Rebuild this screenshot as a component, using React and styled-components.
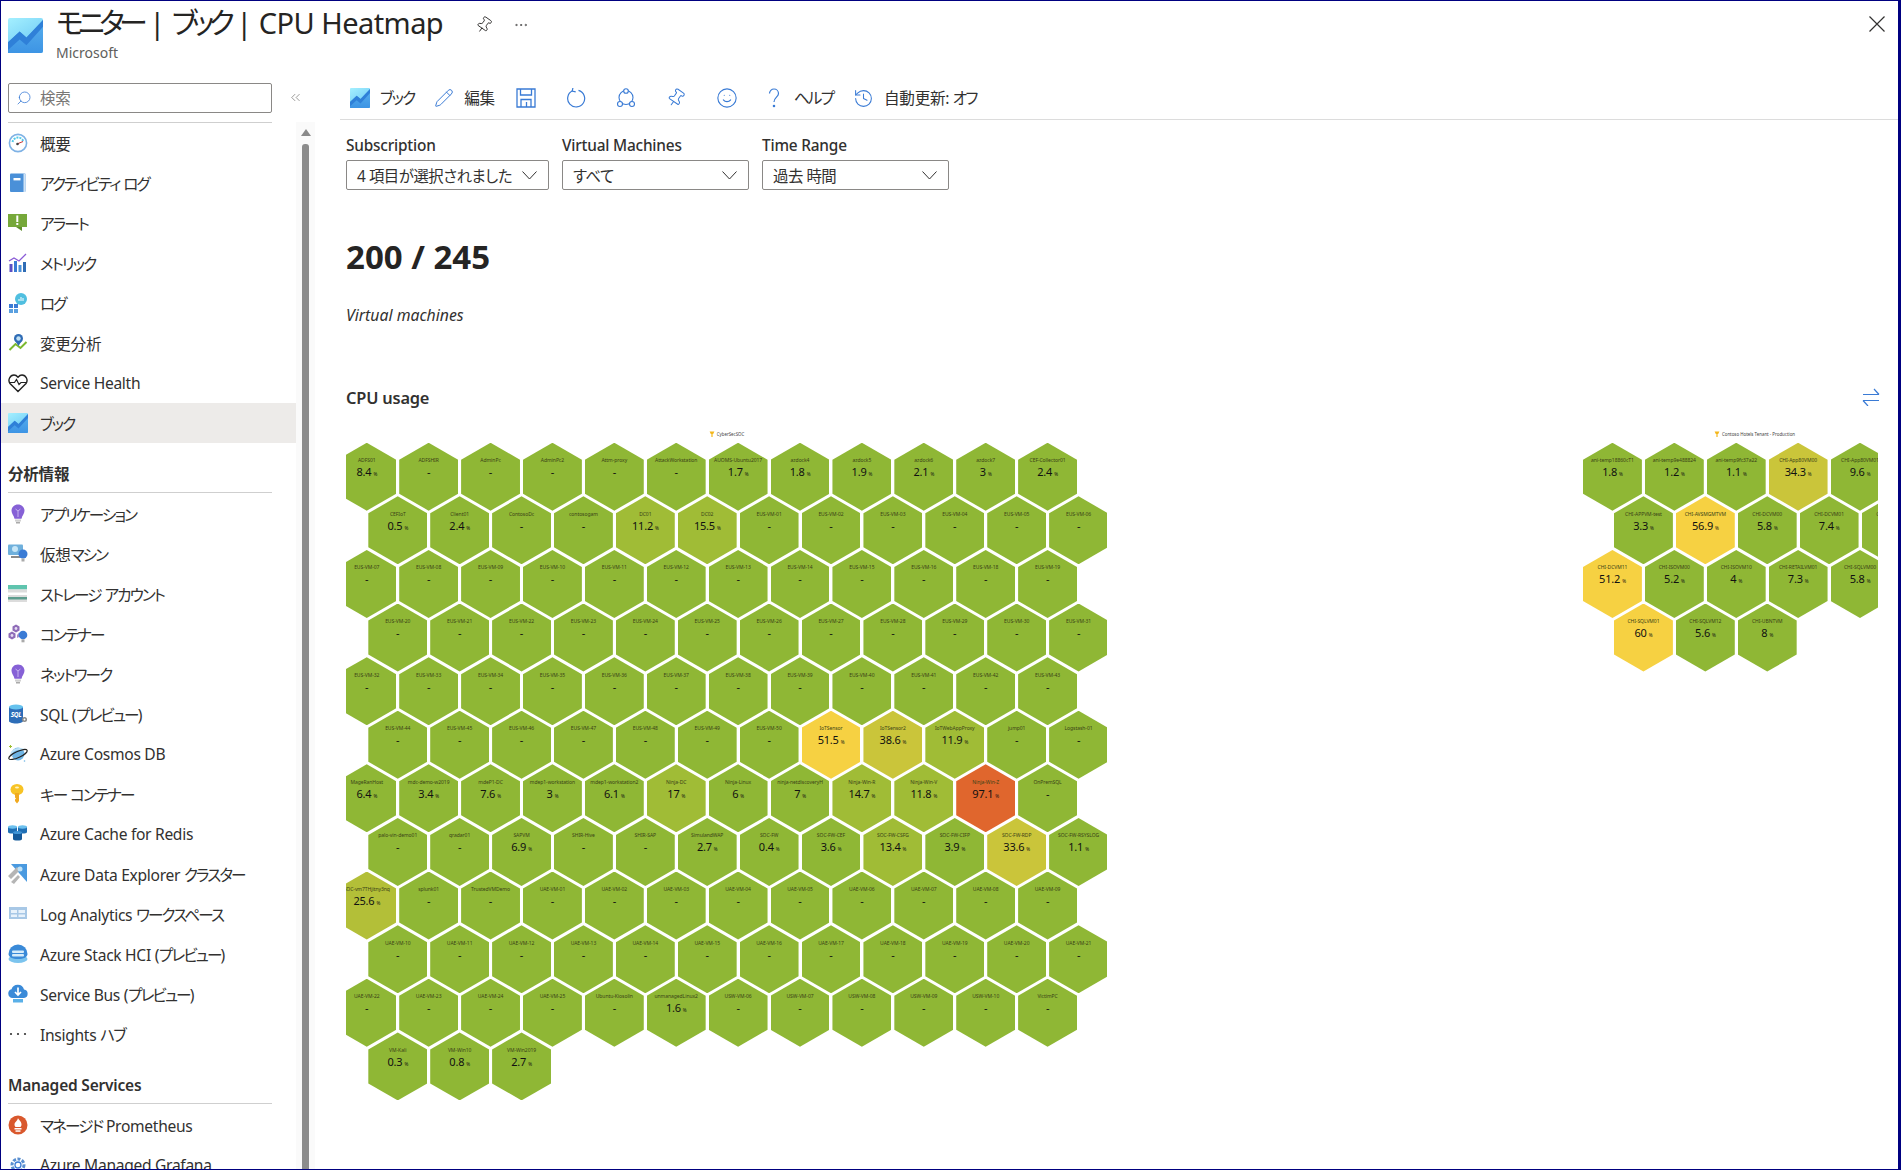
import React from 'react';
import styled, { createGlobalStyle } from 'styled-components';
import { Pencil, Pin, Smile, History, Search, ChevronsLeft, MoreHorizontal } from 'lucide-react';

const Global = createGlobalStyle`
  html, body { margin: 0; padding: 0; background: #fff; }
  body {
    font-family: "Noto Sans", "Noto Sans CJK JP", sans-serif;
    font-feature-settings: "palt";
    color: #323130;
  }
  * { box-sizing: border-box; }
`;

const Kana = styled.span`letter-spacing: -0.12em;`;
const Frame = styled.div`
  width: 1901px; height: 1170px; display: flex; flex-direction: column; overflow: hidden;
  border-style: solid; border-color: #000080; border-width: 1px 3px 1px 1px; background: #fff;
`;
const Header = styled.header`
  height: 68px; flex: none; display: flex; align-items: flex-start; padding: 5px 13px 0 7px;
`;
const LogoWrap = styled.div`margin: 12px 13px 0 0; line-height: 0;`;
const TitleBlock = styled.div`display: flex; flex-direction: column;`;
const TitleRow = styled.div`display: flex; align-items: center; height: 34px;`;
const Title = styled.h1`
  margin: 0; font-size: 29px; line-height: 34px; font-weight: 400; color: #252423; letter-spacing: -0.55px; white-space: nowrap;
  ${Kana} { letter-spacing: -0.19em; }
`;
const TitleAction = styled.span`
  display: inline-flex; color: #323130; margin-left: ${p => p.$ml}px; position: relative; top: 2px;
`;
const Subtitle = styled.div`font-size: 14px; line-height: 20px; margin-top: 3px; color: #605e5c;`;
const CloseBtn = styled.div`margin-left: auto; margin-top: 10px; display: flex; color: #323130;`;

const Body = styled.div`flex: 1; display: flex; min-height: 0;`;
const Sidebar = styled.aside`width: 314px; flex: none; display: flex; min-height: 0;`;
const NavCol = styled.nav`width: 295px; flex: none; overflow: hidden; padding-top: 14px;`;
const SearchBox = styled.div`
  margin: 0 24px 0 7px; height: 30px; border: 1px solid #8a8886; border-radius: 2px;
  display: flex; align-items: center; padding-left: 7px; gap: 8px; font-size: 15.5px; line-height: 26px; color: #797775; letter-spacing: -0.3px;
`;
const Divider = styled.div`height: 1px; background: #cfcfcf; margin: 9px 24px 0 7px;`;
const NavItem = styled.div`
  height: 40px; display: flex; align-items: center; padding-left: 7px; gap: 12px; font-size: 15.6px;
  letter-spacing: -0.3px; white-space: nowrap; color: #323130;
  background: ${p => (p.$active ? '#edebe9' : 'transparent')};
`;
const NavLabel = styled.span`display: block;`;
const SectionHead = styled.div`
  height: 50px; margin: 0 24px 1px 7px; padding-top: 21px; font-size: 15.5px; line-height: 20px; font-weight: 600;
  letter-spacing: -0.2px; border-bottom: 1px solid #cfcfcf; color: #323130;
`;
const ScrollCol = styled.div`width: 19px; flex: none; display: flex; flex-direction: column;`;
const CollapseBtn = styled.div`
  height: 53px; flex: none; margin-left: -20px; padding-top: 21px; display: flex; justify-content: center; align-items: flex-start; color: #605e5c;
`;
const Track = styled.div`flex: 1; background: #fafafa; display: flex; flex-direction: column; align-items: flex-start; padding-left: 6px;`;
const ArrowUp = styled.div`
  margin: 7px 0 0 -1px; width: 0; height: 0; border-left: 5px solid transparent; border-right: 5px solid transparent; border-bottom: 7px solid #8a8a8a;
`;
const Thumb = styled.div`flex: 1; width: 7px; background: #8c8c8c; margin-top: 8px; border-radius: 3px 3px 0 0;`;

const Main = styled.main`flex: 1; min-width: 0; display: flex; flex-direction: column; padding-left: 25px;`;
const Toolbar = styled.div`
  height: 51px; flex: none; display: flex; align-items: center; padding: 8px 0 0 10px; border-bottom: 1px solid #dcdcdc;
  font-size: 15.6px; letter-spacing: -0.3px; color: #323130;
`;
const ToolItem = styled.div`
  display: flex; align-items: center; gap: 10px; margin-left: ${p => p.$ml || 0}px; color: #3a7bd5; line-height: 0;
`;
const ToolLabel = styled.span`color: #323130; line-height: 20px; white-space: nowrap;`;
const Content = styled.div`padding: 0 20px 0 6px; display: flex; flex-direction: column;`;
const Params = styled.div`display: flex; gap: 13px; margin-top: 16px;`;
const Field = styled.div`display: flex; flex-direction: column; width: ${p => p.$w}px;`;
const FieldLabel = styled.label`font-size: 15.4px; line-height: 20px; font-weight: 500; color: #323130; letter-spacing: -0.2px; margin-bottom: 4px;`;
const Select = styled.div`
  height: 30px; border: 1px solid #8a8886; border-radius: 2px; display: flex; align-items: center; justify-content: space-between;
  padding: 0 11px 0 10px; font-size: 15.4px; letter-spacing: -0.45px; color: #323130; white-space: nowrap;
`;
const BigNumber = styled.div`font-size: 33px; line-height: 40px; font-weight: 700; color: #252423; margin-top: 47px;`;
const Caption = styled.div`font-size: 15.8px; line-height: 20px; font-style: italic; color: #323130; margin-top: 28px;`;
const SectionRow = styled.div`display: flex; justify-content: space-between; align-items: center; margin-top: 63px; height: 20px;`;
const SectionTitle = styled.h2`margin: 0; font-size: 16.4px; line-height: 20px; font-weight: 600; color: #323130; letter-spacing: -0.2px;`;
const SwapBtn = styled.div`display: flex; color: #3a7bd5; margin: -3px -2px 0 0;`;
const Clusters = styled.div`display: flex; justify-content: space-between; align-items: flex-start; margin-top: 22px;`;
const Cluster = styled.section`width: ${p => p.$w}px; overflow: hidden; flex: none;`;
const ClusterTitle = styled.div`
  height: 8px; margin-bottom: 4.7px; display: flex; align-items: center; justify-content: center; gap: 2px;
  font-size: 4.4px; line-height: 8px; color: #444; white-space: nowrap; padding-left: ${p => p.$pl || 0}px;
`;
const HexField = styled.div`margin-left: ${p => p.$ml || 0}px;`;
const HexRow = styled.div`
  display: flex; gap: 3px; margin-left: ${p => (p.$odd ? 31 : 0)}px; margin-top: ${p => (p.$first ? 0 : -14.4)}px;
`;
const Hex = styled.div`
  width: 58.9px; height: 68px; flex: none; background: ${p => p.$bg};
  clip-path: polygon(50% 0, 100% 25%, 100% 75%, 50% 100%, 0 75%, 0 25%);
  display: flex; flex-direction: column; align-items: center; padding-top: 14.5px;
`;
const HexName = styled.div`font-size: 5px; line-height: 6px; color: #3a4216; white-space: nowrap; letter-spacing: -0.05px;`;
const HexValue = styled.div`font-size: 11px; line-height: 12px; margin-top: 3px; color: #111; letter-spacing: -0.2px; white-space: nowrap;`;
const HexUnit = styled.span`font-size: 4.6px; margin-left: 2px;`;
const SvgIcon = styled.svg`width: ${p => p.$s || 20}px; height: ${p => p.$s || 20}px; flex: none; display: block;`;

/* Katakana runs are set tighter than the rest of the text, as in the reference font. */
const Jp = ({ children }) =>
  String(children).split(/([\u30A0-\u30FF]+)/).map((part, i) =>
    /[\u30A0-\u30FF]/.test(part) ? <Kana key={i}>{part}</Kana> : part
  );

const BookIcon = ({ s }) => (
  <SvgIcon $s={s} viewBox="0 0 36 36">
    <defs>
      <linearGradient id="bkA" x1="0" y1="0" x2="0.6" y2="1"><stop offset="0" stopColor="#a4f0ff" /><stop offset="1" stopColor="#6cc8f4" /></linearGradient>
      <linearGradient id="bkB" x1="0" y1="0" x2="0" y2="1"><stop offset="0" stopColor="#58b0ee" /><stop offset="1" stopColor="#3d94e4" /></linearGradient>
    </defs>
    <rect width="36" height="36" rx="2" fill="url(#bkA)" />
    <path d="M0 36V25L12 14l7 6L36 2v32a2 2 0 0 1-2 2z" fill="url(#bkB)" />
    <path d="M0 25l12-11 7 6L36 2v7L19 28l-7-6L0 33z" fill="#2f80d8" />
  </SvgIcon>
);
const Gauge = () => (
  <SvgIcon viewBox="0 0 20 20">
    <circle cx="10" cy="10" r="8.6" fill="#fff" stroke="#7fb2e5" strokeWidth="1.6" />
    <path d="M4.5 9a5.6 5.6 0 0 1 11 0" fill="none" stroke="#50c8e8" strokeWidth="2" strokeDasharray="2 1" />
    <path d="M9 11l6-2.5" stroke="#c33" strokeWidth="1" />
    <circle cx="9.5" cy="11" r="1.3" fill="#444" />
  </SvgIcon>
);
const LogBook = () => (
  <SvgIcon viewBox="0 0 20 20">
    <rect x="2" y="0.5" width="15.5" height="18.5" rx="1" fill="#4a90d8" />
    <rect x="15.5" y="0.5" width="2" height="18.5" fill="#cfe3f6" />
    <rect x="5.5" y="5" width="7" height="2.4" fill="#fff" />
  </SvgIcon>
);
const Alert = () => (
  <SvgIcon viewBox="0 0 20 20">
    <rect y="1" width="19" height="13" fill="#76a83a" />
    <path d="M8 14h6v4z" fill="#5e8f2c" />
    <rect x="8.3" y="2.5" width="2" height="6.5" fill="#fff" />
    <rect x="8.3" y="10" width="2" height="2" fill="#fff" />
  </SvgIcon>
);
const Metrics = () => (
  <SvgIcon viewBox="0 0 20 20">
    <path d="M1 8l5-3 5 3 7-7" fill="none" stroke="#8a5bd6" strokeWidth="1.3" />
    <rect x="1.5" y="11" width="3" height="8" fill="#5b4fc4" /><rect x="6" y="8" width="3" height="11" fill="#3a7bd5" />
    <rect x="10.5" y="12" width="3" height="7" fill="#4a90d8" /><rect x="15" y="9" width="3" height="10" fill="#2f6cb5" />
  </SvgIcon>
);
const LogsIcon = () => (
  <SvgIcon viewBox="0 0 20 20">
    <circle cx="13" cy="6" r="6" fill="#50bfe0" />
    <path d="M11 8V6M13 8V4M15 8V5" stroke="#fff" strokeWidth="1" />
    <rect x="1" y="11" width="4" height="4" fill="#3a7bd5" /><rect x="6" y="11" width="4" height="4" fill="#3a7bd5" />
    <rect x="1" y="16" width="4" height="4" fill="#5aa0e0" /><rect x="6" y="16" width="4" height="4" fill="#5aa0e0" />
  </SvgIcon>
);
const Change = () => (
  <SvgIcon viewBox="0 0 20 20">
    <path d="M1.5 17l6-6 5 4 6-6" fill="none" stroke="#7cb82f" strokeWidth="2" />
    <circle cx="10.5" cy="5.5" r="4.5" fill="#2f6cb5" />
    <path d="M8 9l2.5 4 2.5-4z" fill="#2f6cb5" />
    <circle cx="10.5" cy="5.5" r="2.2" fill="#bfe0f5" />
  </SvgIcon>
);
const Heart = () => (
  <SvgIcon viewBox="0 0 20 20">
    <path d="M10 18.5L2 10.5C-0.5 7 2 2 6 2c2 0 3 1 4 2.2C11 3 12 2 14 2c4 0 6.500 5 4 8.500z" fill="#fff" stroke="#222" strokeWidth="1.4" />
    <path d="M1.500 9.500h5l2-3 2.500 5 2-2h5.500" fill="none" stroke="#222" strokeWidth="1.2" />
  </SvgIcon>
);
const Bulb = () => (
  <SvgIcon viewBox="0 0 20 20">
    <path d="M10 0.500c4 0 6.500 3 6.500 6.300 0 3-2.500 4.700-3 8h-7c-.5-3.300-3-5-3-8C3.500 3.500 6 .5 10 .5z" fill="#8661d6" />
    <path d="M7.500 5l2.500 2 2.500-2M10 7v6" fill="none" stroke="#c5b2ee" strokeWidth="1" />
    <rect x="7" y="15.500" width="6" height="2" fill="#d0d0d0" /><rect x="8" y="17.800" width="4" height="1.700" fill="#aaa" />
  </SvgIcon>
);
const VM = () => (
  <SvgIcon viewBox="0 0 20 20">
    <rect y="0.500" width="15" height="10.500" rx="1" fill="#6fb0dc" />
    <circle cx="7" cy="5" r="3" fill="#c7e6f7" />
    <rect x="3" y="12" width="9" height="2" fill="#8a8a8a" />
    <circle cx="15" cy="10" r="4.500" fill="#3a7bd5" /><rect x="13.500" y="14.500" width="3" height="3" fill="#aaa" />
  </SvgIcon>
);
const Storage = () => (
  <SvgIcon viewBox="0 0 20 20">
    <rect y="1" width="19" height="4.500" fill="#5fc4ae" /><rect y="5.500" width="19" height="12.500" fill="#dcdcdc" />
    <rect y="8.500" width="19" height="2.500" fill="#fff" /><rect y="13" width="19" height="2.500" fill="#5d9d8e" />
  </SvgIcon>
);
const Containers = () => (
  <SvgIcon viewBox="0 0 20 20">
    <path d="M8 .5l3.500 2v4l-3.500 2-3.500-2v-4z" fill="#8f6cb8" /><path d="M4 7.500l3.500 2v4L4 15.500l-3.500-2v-4z" fill="#8f6cb8" />
    <circle cx="4" cy="11.500" r="1.400" fill="#e6dcf2" /><circle cx="8" cy="4.500" r="1.400" fill="#e6dcf2" />
    <path d="M11 8.500l1 1v3l-3 1.500v-3z" fill="#a88bcb" />
    <circle cx="15" cy="11" r="4.300" fill="#3a7bd5" /><rect x="13.500" y="15.300" width="3" height="3" fill="#aaa" />
  </SvgIcon>
);
const Sql = () => (
  <SvgIcon viewBox="0 0 20 20">
    <path d="M1 3v14c0 1.300 3 2.500 7 2.500s7-1.200 7-2.500V3z" fill="#2d6db8" />
    <ellipse cx="8" cy="3" rx="7" ry="2.600" fill="#66c2ee" />
    <text x="8" y="13" fontSize="6.500" fontWeight="700" fontStyle="italic" fill="#fff" textAnchor="middle" fontFamily="Noto Sans">SQL</text>
    <circle cx="16.500" cy="15.500" r="2.500" fill="#888" /><circle cx="16.500" cy="15.500" r="1" fill="#fff" />
  </SvgIcon>
);
const Cosmos = () => (
  <SvgIcon viewBox="0 0 20 20">
    <circle cx="10" cy="10" r="6.500" fill="#6fb5e5" />
    <path d="M4 12a8 5 0 0 1 12-6" fill="none" stroke="#bfe2f7" strokeWidth="2" />
    <ellipse cx="10" cy="10.500" rx="10" ry="3" transform="rotate(-25 10 10.500)" fill="none" stroke="#222" strokeWidth="1.100" />
    <path d="M2.500 1v3M1 2.500h3" stroke="#9dbf2f" strokeWidth="1" />
    <circle cx="16.500" cy="17" r=".8" fill="#6fb5e5" />
  </SvgIcon>
);
const Key = () => (
  <SvgIcon viewBox="0 0 20 20">
    <ellipse cx="9" cy="5.500" rx="6.500" ry="5.500" fill="#f7c325" />
    <path d="M7 9h4v8l-2 2.500L7 17v-1.500l1-1-1-1z" fill="#f0a91f" />
    <ellipse cx="9" cy="3.600" rx="2" ry="1" fill="#fff4c2" />
  </SvgIcon>
);
const Redis = () => (
  <SvgIcon viewBox="0 0 20 20">
    <path d="M0 3v5c0 1 2 1.500 4.500 1.500S9 9 9 8V3zM10 3v5c0 1 2 1.500 4.500 1.500S19 9 19 8V3z" fill="#1f6fb5" />
    <ellipse cx="4.500" cy="3" rx="4.500" ry="1.700" fill="#6cc0ee" /><ellipse cx="14.500" cy="3" rx="4.500" ry="1.700" fill="#6cc0ee" />
    <path d="M5 9v6c0 1 2 1.500 4.500 1.500S14 16 14 15V9z" fill="#155a9a" />
    <ellipse cx="9.500" cy="8.500" rx="4.500" ry="1.600" fill="#3f94d6" />
  </SvgIcon>
);
const Explorer = () => (
  <SvgIcon viewBox="0 0 20 20">
    <path d="M3 0h16v18z" fill="#4a9ae0" />
    <path d="M0 12L9 3l3 3-9 9zM3 18l7-7 2 2-6 7z" fill="#b5b5b5" />
    <circle cx="12" cy="5" r="2.500" fill="#bfe2f7" />
  </SvgIcon>
);
const LogA = () => (
  <SvgIcon viewBox="0 0 20 20">
    <rect x="1" y="3" width="18" height="12" fill="#a8c8e6" />
    <path d="M3 6h6v3H3zM10.500 6H17v3h-6.500zM3 10.500h6V13H3zM10.500 10.500H17V13h-6.500z" fill="#e8f2fb" />
  </SvgIcon>
);
const Stack = () => (
  <SvgIcon viewBox="0 0 20 20">
    <ellipse cx="10" cy="15" rx="9.500" ry="4" fill="#7cc4ee" />
    <path d="M.5 10a9.500 9.500 0 0 1 19 0c0 3-4 5-9.500 5s-9.500-2-9.500-5z" fill="#3a8ad8" />
    <rect x="4" y="6.500" width="12" height="2.500" rx="1" fill="#d6ecfa" /><rect x="4" y="10" width="12" height="2.500" rx="1" fill="#d6ecfa" />
  </SvgIcon>
);
const Bus = () => (
  <SvgIcon viewBox="0 0 20 20">
    <path d="M4.500 14a4.500 4.500 0 0 1-1-8.800A6.500 6.500 0 0 1 16 5.500a4.300 4.300 0 0 1 0 8.500z" fill="#3a8ad8" />
    <path d="M10 3.500v7M7 8l3 3 3-3" stroke="#fff" strokeWidth="1.700" fill="none" />
    <rect x="5" y="15" width="10" height="3.500" fill="#5ab0e8" />
  </SvgIcon>
);
const Dots = () => (
  <SvgIcon viewBox="0 0 20 20">
    <circle cx="3" cy="10" r="1.100" fill="#333" /><circle cx="10" cy="10" r="1.100" fill="#333" /><circle cx="17" cy="10" r="1.100" fill="#333" />
  </SvgIcon>
);
const Prom = () => (
  <SvgIcon viewBox="0 0 20 20">
    <circle cx="10" cy="10" r="9.500" fill="#d9582d" />
    <path d="M10 3c.5 2 3.500 3 3.500 6.500 0 1-.5 2-1 2.500h-5c-.5-.5-1-1.500-1-2.500C6.500 7 9.500 6 10 3z" fill="#fff" />
    <rect x="6.500" y="13" width="7" height="1.500" fill="#fff" /><rect x="7.500" y="15.300" width="5" height="1.500" fill="#fff" />
  </SvgIcon>
);
const Grafana = () => (
  <SvgIcon viewBox="0 0 20 20">
    <circle cx="10" cy="10" r="6" fill="none" stroke="#5a8fd0" strokeWidth="3" strokeDasharray="3 1.500" />
    <circle cx="10" cy="10" r="3" fill="#fff" stroke="#3a7bd5" strokeWidth="1.300" />
  </SvgIcon>
);
const Refresh = () => (
  <SvgIcon viewBox="0 0 20 20" fill="none" stroke="currentColor" strokeWidth="1.200">
    <path d="M6.500 2.800a8.500 8.500 0 1 0 6 -.5" /><path d="M7 -.5l-.8 3.500 3.500.8" />
  </SvgIcon>
);
const Share = () => (
  <SvgIcon viewBox="0 0 20 20" fill="none" stroke="currentColor" strokeWidth="1.100">
    <circle cx="10" cy="9.500" r="7" /><circle cx="10" cy="3" r="2.300" fill="#fff" /><circle cx="4" cy="16" r="2.500" fill="#fff" /><circle cx="16" cy="16" r="2.500" fill="#fff" />
  </SvgIcon>
);
const Save = () => (
  <SvgIcon viewBox="0 0 20 20" fill="none" stroke="currentColor" strokeWidth="1.300">
    <path d="M1 1h18v18H1z" /><path d="M4.500 1v6h11V1M5 19v-7.500h10V19M10.500 14v5" />
  </SvgIcon>
);
const Question = () => (
  <SvgIcon viewBox="0 0 20 20" fill="none" stroke="currentColor" strokeWidth="1.200">
    <path d="M5.500 5.500C5.500 3 7.500 1 10 1s4.500 2 4.500 4.500c0 3.500-4.500 4-4.500 8.500" /><circle cx="10" cy="18" r=".7" fill="currentColor" />
  </SvgIcon>
);
const Sprout = () => (
  <SvgIcon $s={6} viewBox="0 0 10 10"><path d="M1 1h8L7 5H6v5H4V5H3z" fill="#f4b71c" /></SvgIcon>
);
const Chevron = () => (
  <SvgIcon $s={15} viewBox="0 0 15 15" fill="none" stroke="#323130" strokeWidth="1"><path d="M.5 3.500l7 7.500 7-7.500" /></SvgIcon>
);
const Swap = () => (
  <SvgIcon $s={18} viewBox="0 0 18 18" fill="none" stroke="currentColor" strokeWidth="1.200">
    <path d="M1 6.500h16M12 1l5 5.500M1 12.500h16M1 12.500L6 18" />
  </SvgIcon>
);
const Close = () => (
  <SvgIcon $s={16} viewBox="0 0 16 16" fill="none" stroke="currentColor" strokeWidth="1.200"><path d="M.5.500l15 15M15.500.500l-15 15" /></SvgIcon>
);

const heat = v => {
  if (v == null || v < 10) return '#8fb735';
  if (v < 20) return '#a0bc36';
  if (v < 30) return '#b3bf38';
  if (v < 45) return '#cac53a';
  if (v < 80) return '#f6d142';
  return '#e0662d';
};
const seq = (p, a, b, skip = []) => {
  const r = [];
  for (let i = a; i <= b; i++) if (!skip.includes(i)) r.push([`${p}-${String(i).padStart(2, '0')}`]);
  return r;
};

const leftRows = [
  [['ADFS01', 8.4], ['ADFSHIR'], ['AdminPc'], ['AdminPc2'], ['Attm-proxy'], ['AttackWorkstation'], ['AUOMS-Ubuntu2017', 1.7], ['azdock4', 1.8], ['azdock5', 1.9], ['azdock6', 2.1], ['azdock7', 3], ['CEF-Collector01', 2.4]],
  [['CEFIoT', 0.5], ['Client01', 2.4], ['ContosoDc'], ['contosogam'], ['DC01', 11.2], ['DC02', 15.5], ...seq('EUS-VM', 1, 6)],
  seq('EUS-VM', 7, 19, [17]),
  seq('EUS-VM', 20, 31),
  seq('EUS-VM', 32, 43),
  [...seq('EUS-VM', 44, 50), ['IoTSensor', 51.5], ['IoTSensor2', 38.6], ['IoTWebAppProxy', 11.9], ['jump01'], ['Logstash-01']],
  [['MageRanHost', 6.4], ['mdc-demo-w2019', 3.4], ['mdeP1-DC', 7.6], ['mdep1-workstation', 3], ['mdep1-workstation2', 6.1], ['Ninja-DC', 17], ['Ninja-Linux', 6], ['ninja-netdiscoveryH', 7], ['Ninja-Win-R', 14.7], ['Ninja-Win-V', 11.8], ['Ninja-Win-Z', 97.1], ['OnPremSQL']],
  [['palo-vin-demo01'], ['qradar01'], ['SAPVM', 6.9], ['SHIR-Hive'], ['SHIR-SAP'], ['SimulandWAP', 2.7], ['SOC-FW', 0.4], ['SOC-FW-CEF', 3.6], ['SOC-FW-CSFG', 13.4], ['SOC-FW-CIFP', 3.9], ['SOC-FW-RDP', 33.6], ['SOC-FW-RSYSLOG', 1.1]],
  [['SOC-vm7THjitny3nq', 25.6], ['splunk01'], ['TrustedVMDemo'], ...seq('UAE-VM', 1, 9)],
  seq('UAE-VM', 10, 21),
  [...seq('UAE-VM', 22, 25), ['Ubuntu-Kiosolin'], ['unmanagedLinux2', 1.6], ...seq('USW-VM', 6, 10), ['VictimPC']],
  [['VM-Kali', 0.3], ['VM-Win10', 0.8], ['VM-Win2019', 2.7]],
];
const rightRows = [
  [['ani-temp18860cT1', 1.8], ['ani-temp9e488824', 1.2], ['ani-temp9fc37a22', 1.1], ['CHI-App80VM00', 34.3], ['CHI-App80VM01', 9.6]],
  [['CHI-APPVM-test', 3.3], ['CHI-AVSMGMTVM', 56.9], ['CHI-DCVM00', 5.8], ['CHI-DCVM01', 7.4], ['CHI-DCVM10', 5.3]],
  [['CHI-DCVM11', 51.2], ['CHI-ISOVM00', 5.2], ['CHI-ISOVM10', 4], ['CHI-RETAILVM01', 7.3], ['CHI-SQLVM00', 5.8]],
  [['CHI-SQLVM01', 60], ['CHI-SQLVM12', 5.6], ['CHI-UBNTVM', 8]],
];

const navTop = [
  [Gauge, '概要'], [LogBook, 'アクティビティ ログ'], [Alert, 'アラート'], [Metrics, 'メトリック'], [LogsIcon, 'ログ'],
  [Change, '変更分析'], [Heart, 'Service Health'], [BookIcon, 'ブック', true],
];
const navInsights = [
  [Bulb, 'アプリケーション'], [VM, '仮想マシン'], [Storage, 'ストレージ アカウント'], [Containers, 'コンテナー'], [Bulb, 'ネットワーク'],
  [Sql, 'SQL (プレビュー)'], [Cosmos, 'Azure Cosmos DB'], [Key, 'キー コンテナー'], [Redis, 'Azure Cache for Redis'],
  [Explorer, 'Azure Data Explorer クラスター'], [LogA, 'Log Analytics ワークスペース'], [Stack, 'Azure Stack HCI (プレビュー)'],
  [Bus, 'Service Bus (プレビュー)'], [Dots, 'Insights ハブ'],
];
const navManaged = [[Prom, 'マネージド Prometheus'], [Grafana, 'Azure Managed Grafana']];

const NavList = ({ items }) => items.map(([Icon, label, active]) => (
  <NavItem key={label} $active={active}><Icon /><NavLabel><Jp>{label}</Jp></NavLabel></NavItem>
));

const HexGrid = ({ rows, ml }) => (
  <HexField $ml={ml}>
    {rows.map((row, i) => (
      <HexRow key={i} $odd={i % 2 === 1} $first={i === 0}>
        {row.map(([name, v]) => (
          <Hex key={name} $bg={heat(v)}>
            <HexName>{name}</HexName>
            <HexValue>{v == null ? '-' : v}{v != null && <HexUnit>%</HexUnit>}</HexValue>
          </Hex>
        ))}
      </HexRow>
    ))}
  </HexField>
);

export default function App() {
  return (
    <>
      <Global />
      <Frame>
        <Header>
          <LogoWrap><BookIcon s={35} /></LogoWrap>
          <TitleBlock>
            <TitleRow>
              <Title><Jp>モニター | ブック | CPU Heatmap</Jp></Title>
              <TitleAction $ml={32}><Pin size={18} strokeWidth={1.2} style={{ transform: 'rotate(35deg)' }} /></TitleAction>
              <TitleAction $ml={20}><MoreHorizontal size={16} strokeWidth={1} /></TitleAction>
            </TitleRow>
            <Subtitle>Microsoft</Subtitle>
          </TitleBlock>
          <CloseBtn><Close /></CloseBtn>
        </Header>
        <Body>
          <Sidebar>
            <NavCol>
              <SearchBox><Search size={16} strokeWidth={1.2} color="#3a7bd5" style={{ transform: 'scaleX(-1)' }} />検索</SearchBox>
              <Divider />
              <NavList items={navTop} />
              <SectionHead>分析情報</SectionHead>
              <NavList items={navInsights} />
              <SectionHead>Managed Services</SectionHead>
              <NavList items={navManaged} />
            </NavCol>
            <ScrollCol>
              <CollapseBtn><ChevronsLeft size={15} strokeWidth={1} /></CollapseBtn>
              <Track><ArrowUp /><Thumb /></Track>
            </ScrollCol>
          </Sidebar>
          <Main>
            <Toolbar>
              <ToolItem><BookIcon /><ToolLabel><Jp>ブック</Jp></ToolLabel></ToolItem>
              <ToolItem $ml={20}><Pencil size={20} strokeWidth={1.2} /><ToolLabel>編集</ToolLabel></ToolItem>
              <ToolItem $ml={21}><Save /></ToolItem>
              <ToolItem $ml={30}><Refresh /></ToolItem>
              <ToolItem $ml={30}><Share /></ToolItem>
              <ToolItem $ml={30}><Pin size={20} strokeWidth={1.2} style={{ transform: 'rotate(35deg)' }} /></ToolItem>
              <ToolItem $ml={30}><Smile size={22} strokeWidth={1.2} /></ToolItem>
              <ToolItem $ml={26}><Question /><ToolLabel><Jp>ヘルプ</Jp></ToolLabel></ToolItem>
              <ToolItem $ml={20}><History size={21} strokeWidth={1.2} /><ToolLabel><Jp>自動更新: オフ</Jp></ToolLabel></ToolItem>
            </Toolbar>
            <Content>
              <Params>
                <Field $w={203}><FieldLabel>Subscription</FieldLabel><Select>4 項目が選択されました<Chevron /></Select></Field>
                <Field $w={187}><FieldLabel>Virtual Machines</FieldLabel><Select>すべて<Chevron /></Select></Field>
                <Field $w={187}><FieldLabel>Time Range</FieldLabel><Select>過去 時間<Chevron /></Select></Field>
              </Params>
              <BigNumber>200 / 245</BigNumber>
              <Caption>Virtual machines</Caption>
              <SectionRow>
                <SectionTitle>CPU usage</SectionTitle>
                <SwapBtn><Swap /></SwapBtn>
              </SectionRow>
              <Clusters>
                <Cluster $w={761}>
                  <ClusterTitle><Sprout />CyberSecSOC</ClusterTitle>
                  <HexGrid rows={leftRows} ml={-8.7} />
                </Cluster>
                <Cluster $w={295}>
                  <ClusterTitle $pl={48}><Sprout />Contoso Hotels Tenant - Production</ClusterTitle>
                  <HexGrid rows={rightRows} ml={0} />
                </Cluster>
              </Clusters>
            </Content>
          </Main>
        </Body>
      </Frame>
    </>
  );
}
